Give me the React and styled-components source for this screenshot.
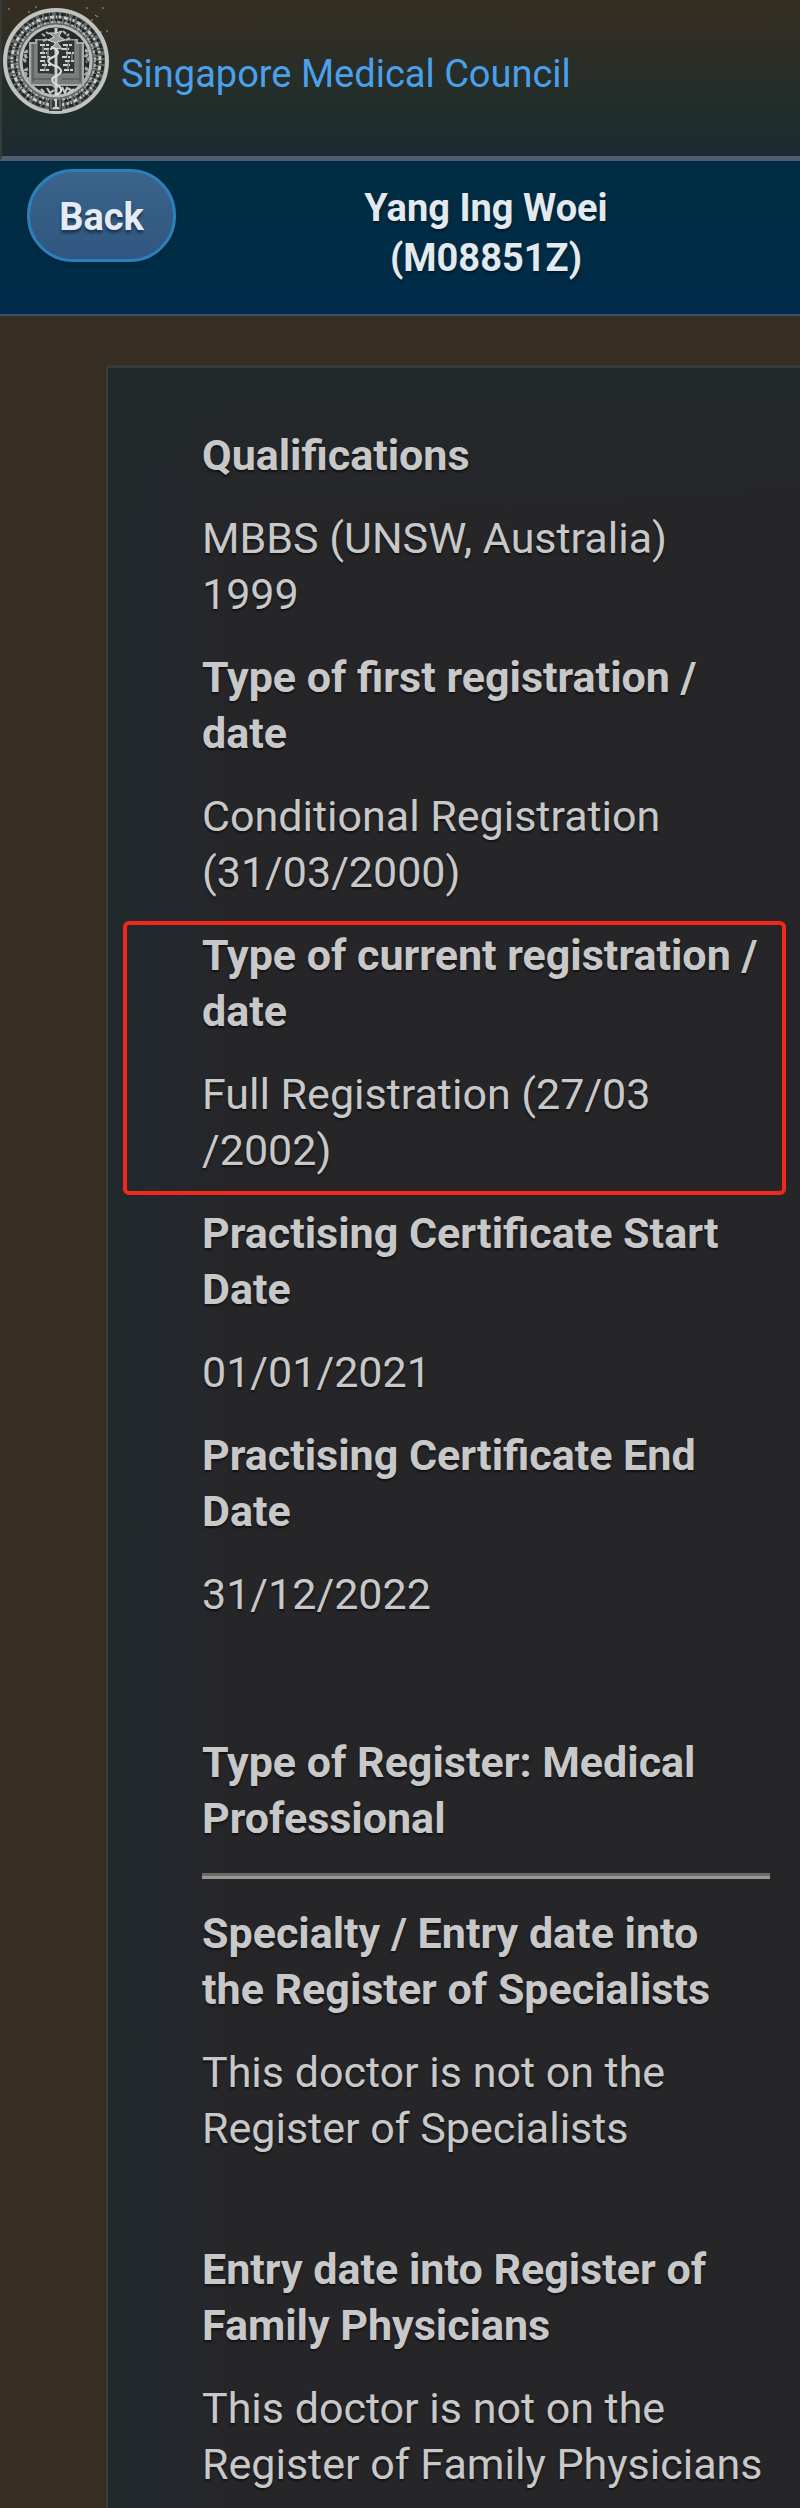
import styled, { createGlobalStyle } from 'styled-components';

const GlobalStyle = createGlobalStyle`
    * {
        box-sizing: border-box;
    }

    body {
        margin: 0;
        background-color: #362d23;
        font-family: Roboto, "Liberation Sans", sans-serif;
    }
`;

const Page = styled.div`
    display: flex;
    flex-direction: column;
    min-height: 100vh;
`;

const Header = styled.header`
    display: flex;
    align-items: flex-start;
    height: 161px;
    padding: 6px 2px 0 0;
    border-left: 2px solid #373b37;
    border-bottom: 5px solid #4c5e70;
    background: linear-gradient(#362d21, #2c2e27 35%, #1f2d2a 75%, #1c2a33);
`;

const Brand = styled.div`
    padding: 40px 0 0 12px;
    font-size: 38px;
    line-height: 56px;
    color: #4ba0ea;
`;

const Emblem = styled.svg`
    width: 107px;
    height: 110px;
    flex: none;
`;

const TitleBar = styled.div`
    display: flex;
    align-items: flex-start;
    height: 155px;
    padding: 8px 0 0 27px;
    border-bottom: 2px solid #36526d;
    background: linear-gradient(#002c42, #002d45 50%, #002b4a);
`;

const BackButton = styled.button`
    width: 149px;
    height: 93px;
    padding: 3px 0 0;
    border: 3px solid #2a80bb;
    border-radius: 46px;
    background: linear-gradient(#3a648b, #2f5680);
    box-shadow: 0 2px 5px rgba(0, 0, 0, 0.2);
    color: #e4ebf5;
    font-family: inherit;
    font-size: 38px;
    font-weight: 700;
    text-shadow: 0 3px 3px #1c344f;
    cursor: pointer;
`;

const Title = styled.h1`
    flex: 1;
    margin: 0;
    padding: 14px 4px 0 0;
    color: #e2eaf0;
    font-size: 38px;
    font-weight: 700;
    line-height: 50px;
    text-align: center;
    text-shadow: 0 2px 3px #001827;
`;

const Panel = styled.main`
    flex: 1;
    margin: 49px 0 0 106px;
    padding: 59px 30px 16px 94px;
    border-top: 3px solid #343a38;
    border-left: 2px solid #3a4038;
    background:
        linear-gradient(#23292b, rgba(35, 41, 43, 0) 160px),
        linear-gradient(to right, #202a2b, #24282d 60px, #262629 120px, #262528);
    color: #c8c8c9;
    font-size: 43px;
    line-height: 56px;
    text-shadow: 0 2px 2px #111214;
`;

const Details = styled.dl`
    display: flex;
    flex-direction: column;
    gap: 27px;
    margin: 0;
`;

const Entry = styled.div`
    display: flex;
    flex-direction: column;
    gap: 27px;
    position: relative;
    margin-top: ${props => props.$spaced ? '58px' : '0'};

    &::after {
        content: '';
        display: ${props => props.$marked ? 'block' : 'none'};
        position: absolute;
        inset: -6px -16px -17px -79px;
        border: 4px solid #f3281b;
        border-radius: 6px;
    }
`;

const Label = styled.dt`
    font-weight: 700;
`;

const Value = styled.dd`
    margin: 0;
`;

const RegisterType = styled.h2`
    margin: 112px 0 27px;
    font-size: inherit;
    font-weight: 700;
`;

const Divider = styled.hr`
    margin: 0 0 26px;
    border: solid #6d6b69;
    border-width: 3px 0 0;
    border-bottom: 3px solid #9a9792;
`;

const registration = [
    { label: ['Qualifications'], value: ['MBBS (UNSW, Australia)', '1999'] },
    { label: ['Type of first registration /', 'date'], value: ['Conditional Registration', '(31/03/2000)'] },
    { label: ['Type of current registration /', 'date'], value: ['Full Registration (27/03', '/2002)'], marked: true },
    { label: ['Practising Certificate Start', 'Date'], value: ['01/01/2021'] },
    { label: ['Practising Certificate End', 'Date'], value: ['31/12/2022'] },
];

const registers = [
    { label: ['Specialty / Entry date into', 'the Register of Specialists'], value: ['This doctor is not on the', 'Register of Specialists'] },
    { label: ['Entry date into Register of', 'Family Physicians'], value: ['This doctor is not on the', 'Register of Family Physicians'], spaced: true },
];

const Lines = ({ text }) => text.map((line, i) => (
    <span key={line}>{i > 0 && <br />}{line}</span>
));

const DetailList = ({ items }) => (
    <Details>
        {items.map(item => (
            <Entry key={item.label[0]} $marked={item.marked} $spaced={item.spaced}>
                <Label><Lines text={item.label} /></Label>
                <Value><Lines text={item.value} /></Value>
            </Entry>
        ))}
    </Details>
);

const Seal = () => (
    <Emblem viewBox="0 0 107 110" fill="none" aria-hidden="true">
        <circle cx="54" cy="55" r="42" stroke="#626764" strokeWidth="16" />
        <circle cx="54" cy="55" r="51" stroke="#bfc4c1" strokeWidth="4" />
        <circle cx="54" cy="55" r="47" stroke="#232826" strokeWidth="3" strokeDasharray="3 2 5 1 2 4" />
        <circle cx="54" cy="55" r="44" stroke="#c9cdca" strokeWidth="3" strokeDasharray="2 3 4 2 1 2" />
        <circle cx="54" cy="55" r="41" stroke="#202523" strokeWidth="3" strokeDasharray="4 2 1 3 2 1" />
        <circle cx="54" cy="55" r="39" stroke="#b4b9b6" strokeWidth="2" strokeDasharray="1 2 3 1" />
        <circle cx="54" cy="55" r="35" fill="#252b29" stroke="#b9bebb" strokeWidth="3" />
        {/* open book */}
        <path d="M28 37h6v-3h12q6 0 8 4q2-4 8-4h13v3h6v42H58l-4 3-4-3H28z" fill="#777b7a" stroke="#a6aaa8" strokeWidth="2" />
        <path d="M35 34h11q6 0 8 4q2-4 8-4h11v34H61q-5 0-7 3-2-3-7-3H35z" fill="#303633" stroke="#8f9492" />
        <path d="M31 38v38M78 38v38M31 73h18M60 73h18" stroke="#4d5251" strokeWidth="1" />
        <path d="M38 39h11M42 43h8M38 47h7M39 51h10M38 55h6M40 59h9M38 64h10M61 39h10M60 43h7M64 47h8M60 51h8M63 55h9M61 59h7M62 64h10" stroke="#d0d3d1" strokeWidth="2" strokeDasharray="5 1 3 2" />
        <path d="M41 39v8M46 43v13M43 56v9M65 39v11M70 47v9M66 55v9" stroke="#a9aeab" strokeWidth="1" />
        {/* crest and staff */}
        <path d="M54 22v67" stroke="#c8ccca" strokeWidth="3" />
        <path d="M47 27l5 4-6 3 8 3-5 5 11 1-5-7 8-2-6-4 3-5-6 2z" fill="#999e9b" stroke="#d6d9d7" />
        <path d="M49 41q13 5 2 10t5 10q7 5-2 9t3 10q6 6-4 9" stroke="#dadddb" strokeWidth="2" />
        <path d="M44 26l3 2M61 25l3 3M45 33l-4 2M64 34l4-2M43 30l-3-2M67 28l-2 2" stroke="#b8bcb9" strokeWidth="2" />
        {/* mantling round the book */}
        <path d="M26 45q-5 1-2 6q-4 3 1 5M26 63q-5 1-2 5q-2 4 3 5M83 44q5 2 1 6q5 3 0 6M83 62q5 2 1 6q4 3-2 6" stroke="#a7aca9" strokeWidth="3" strokeDasharray="4 1" />
        <path d="M45 82l3 5 4-3M60 81l3 6 2-5 4 2M66 87l6-4M39 83l3 3" stroke="#c7cbc9" strokeWidth="2" />
        <path d="M47 93h13v12H47z" fill="#343a37" />
        <path d="M49 93h9v10h-9z" stroke="#8f9492" />
        <path d="M54 94v8M52 94h3M51 102h6" stroke="#cbcfcd" strokeWidth="2" />
        {/* loose specks */}
        <path d="M6 3h2M26 6h2M33 1h2M84 2h2M93 9l3 2M100 2h2M104 25h2M89 14h2M98 26h2" stroke="#a59f92" strokeWidth="1" />
    </Emblem>
);

const App = () => {
    return (
        <Page>
            <GlobalStyle />
            <Header>
                <Seal />
                <Brand>Singapore Medical Council</Brand>
            </Header>
            <TitleBar>
                <BackButton type="button">Back</BackButton>
                <Title>Yang Ing Woei<br />(M08851Z)</Title>
            </TitleBar>
            <Panel>
                <DetailList items={registration} />
                <RegisterType>Type of Register: Medical<br />Professional</RegisterType>
                <Divider />
                <DetailList items={registers} />
            </Panel>
        </Page>
    );
};

export default App;
